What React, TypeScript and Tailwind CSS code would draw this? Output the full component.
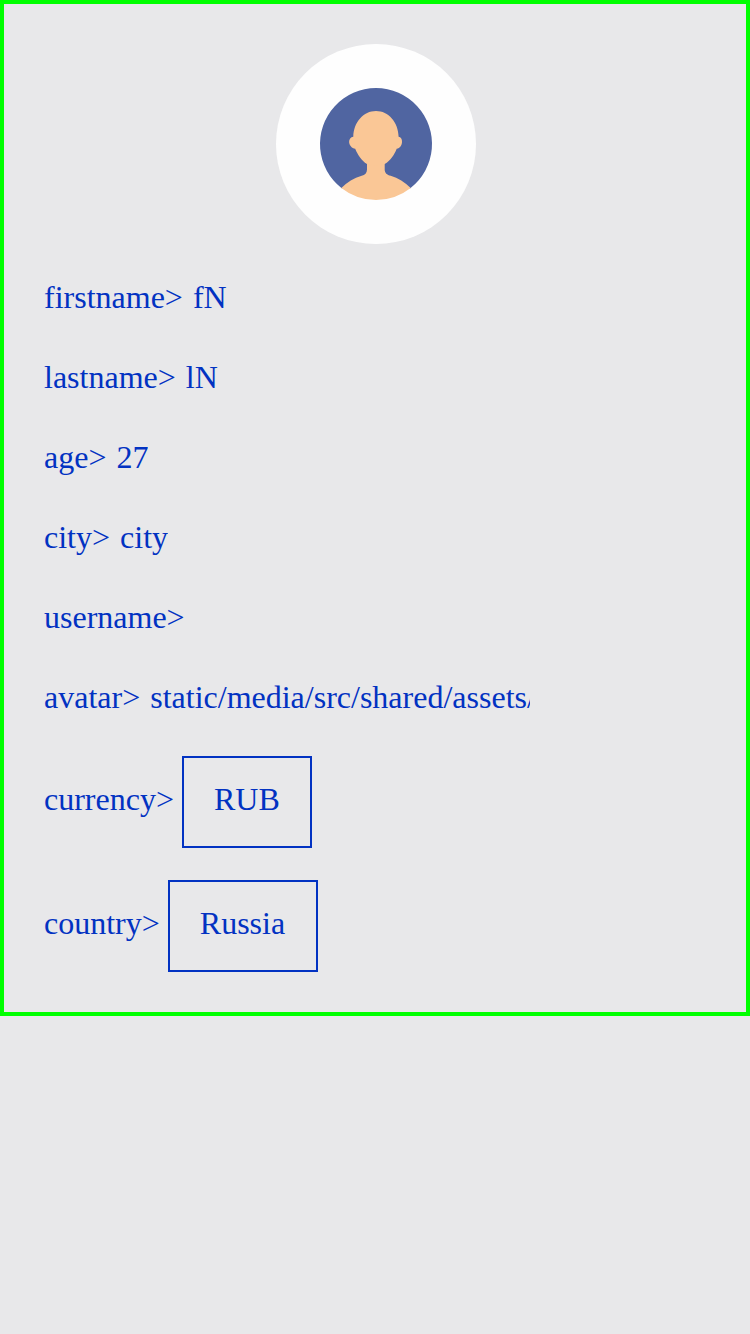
import React from "react";

function Field({ label, value, width }: { label: string; value: string; width?: string }) {
  return (
    <div className="flex h-[36px] items-center gap-[10px] whitespace-nowrap">
      <span>{label}&gt;</span>
      <span className={"overflow-hidden " + (width ?? "")}>{value}</span>
    </div>
  );
}

function Picker({ label, value, width }: { label: string; value: string; width: string }) {
  return (
    <div className="flex h-[92px] items-center gap-2 whitespace-nowrap">
      <span className="pb-1.5">{label}&gt;</span>
      <button className={"h-[92px] border-2 border-[#0232c2] pb-1.5 pl-[30px] text-left " + width}>{value}</button>
    </div>
  );
}

function Avatar() {
  return (
    <svg viewBox="0 0 200 200" className="block h-[200px] w-[200px] shrink-0" aria-label="avatar">
      <circle cx="100" cy="100" r="100" fill="#fefefe" />
      <path d="M65.700 144.300A56 56 0 1 1 134.300 144.300Z" fill="#5065a1" />
      <g fill="#fac796">
        <path d="M91 118H108.700V125.500C108.700 129 111 131 114.700 131.700C122 134 129 138 134.700 144A56 56 0 0 1 65.300 144C71 138 78 134 85.700 131.700C89 131 91 129 91 125.500Z" />
        <path d="M100 66.900C112.500 66.900 122.300 78 122.600 92.700C125 93 126.200 95 126 98C125.800 101.500 124 104.300 120.700 104.700C118.500 110.500 114.500 116.500 108.700 120.100C103 122.600 97 122.600 91 120.100C85.500 116.500 81.500 110.500 79.200 104.700C76 104.500 73.300 101.500 73.100 98C73 95.500 74.700 93 77.300 92.700C77.600 78 87.500 66.900 100 66.900Z" />
      </g>
    </svg>
  );
}

export default function App() {
  return (
    <div className="min-h-screen bg-[#e8e8ea] font-['Liberation_Serif',serif] text-[32px] leading-[36px] text-[#0232c2]">
      <main className="flex h-[1016px] flex-col border-4 border-[#00ff00] px-10 pt-10">
        <div className="flex justify-center pl-[2px]"><Avatar /></div>
        <div className="mt-[35px] flex flex-col gap-11">
          <Field label="firstname" value="fN" />
          <Field label="lastname" value="lN" />
          <Field label="age" value="27" />
          <Field label="city" value="city" />
          <Field label="username" value="" />
          <Field label="avatar" value="static/media/src/shared/assets/" width="w-[380px]" />
        </div>
        <div className="mt-[41px] flex flex-col gap-8">
          <Picker label="currency" value="RUB" width="w-[130px]" />
          <Picker label="country" value="Russia" width="w-[150px]" />
        </div>
      </main>
    </div>
  );
}
